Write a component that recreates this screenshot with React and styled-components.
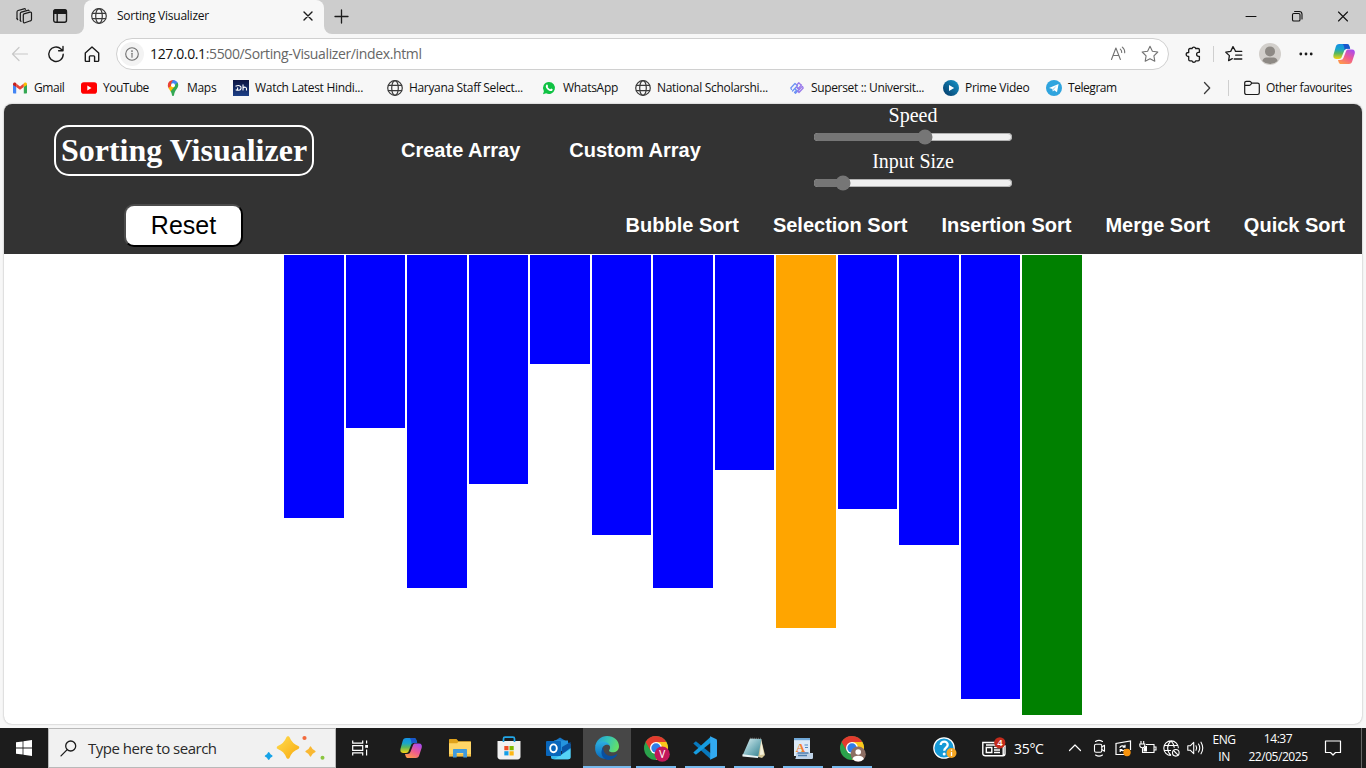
import React from 'react';
import styled, { createGlobalStyle, css } from 'styled-components';

const UI = '"Open Sans", "Noto Sans", "Liberation Sans", sans-serif';

const GlobalStyle = createGlobalStyle`
  *, *::before, *::after { box-sizing: border-box; }
  html, body { margin: 0; padding: 0; }
  body { background: #f7f7f7; overflow: hidden; font-family: ${UI}; }
  svg { display: block; flex: none; overflow: visible; }
`;

const Screen = styled.div`
  width: 1366px;
  height: 768px;
  display: flex;
  flex-direction: column;
  background: #f7f7f7;
`;

/* ---------- browser chrome ---------- */

const TabStrip = styled.div`
  height: 34px;
  display: flex;
  background: #cdcdcd;
`;

const StripLeft = styled.div`
  width: 84px;
  display: flex;
  align-items: center;
  gap: 19px;
  padding: 0 0 2px 16px;
  border-bottom-right-radius: 8px;
  background: #cdcdcd;
`;

const TabBack = styled.div`
  flex: ${p => (p.$fill ? 1 : 'none')};
  background: #f7f7f7;
  display: flex;
`;

const Tab = styled.div`
  width: 240px;
  height: 34px;
  display: flex;
  align-items: center;
  padding: 0 8px 2px 7px;
  background: #f7f7f7;
  border-radius: 8px 8px 0 0;
`;

const TabCorners = styled.div`
  background: linear-gradient(#cdcdcd 16px, #f7f7f7 16px);
`;

const TabTitle = styled.span`
  flex: 1;
  margin-left: 10px;
  font-size: 12px;
  line-height: 16px;
  padding-bottom: 1px;
  letter-spacing: -0.24px;
  color: #111;
  white-space: nowrap;
`;

const StripRight = styled.div`
  flex: 1;
  display: flex;
  align-items: center;
  padding: 0 17px 2px 10px;
  border-bottom-left-radius: 8px;
  background: #cdcdcd;
`;

const WindowButtons = styled.div`
  margin-left: auto;
  display: flex;
  gap: 34px;
`;

const Toolbar = styled.div`
  height: 40px;
  display: flex;
  align-items: center;
  padding: 0 0 0 11px;
`;

const NavButtons = styled.div`
  width: 105px;
  display: flex;
  gap: 18px;
`;

const AddressBar = styled.div`
  width: 1053px;
  height: 32px;
  display: flex;
  align-items: center;
  padding: 0 9px 0 3px;
  background: #fff;
  border: 1px solid #d0d0d0;
  border-radius: 16px;
`;

const SiteInfo = styled.div`
  width: 24px;
  height: 24px;
  display: grid;
  place-items: center;
  border-radius: 50%;
  background: #f3f3f3;
`;

const Url = styled.span`
  flex: 1;
  margin-left: 6px;
  padding-bottom: 1px;
  font-size: 14px;
  letter-spacing: -0.37px;
  color: #666;
  white-space: nowrap;
  b { font-weight: 400; color: #111; }
`;

const AddressActions = styled.div`
  display: flex;
  align-items: center;
  gap: 14px;
`;

const ToolbarActions = styled.div`
  display: grid;
  grid-template-columns: 18px 22px 20px 52px 20px 39px;
  place-items: center;
  padding-left: 15px;
  & > :last-child { justify-self: end; }
`;

const Divider = styled.span`
  width: 1px;
  height: 16px;
  background: #cfcfcf;
`;

const BookmarkBar = styled.div`
  height: 30px;
  display: flex;
  align-items: center;
  padding: 0 12px 2px;
`;

const BookmarkItem = styled.div`
  width: ${p => p.$width}px;
  display: flex;
  align-items: center;
  gap: 6px;
  font-size: 12px;
  line-height: 16px;
  letter-spacing: ${p => p.$spacing ?? -0.33}px;
  color: #111;
  white-space: nowrap;
`;

const BookmarkEnd = styled.div`
  margin-left: auto;
  display: flex;
  align-items: center;
  gap: 15px;
  & > :first-child { margin-right: 2px; }
`;

/* ---------- page ---------- */

const Page = styled.main`
  width: 1358px;
  height: 620px;
  margin: 0 4px 4px;
  overflow: hidden;
  background: #fff;
  border-radius: 8px;
  box-shadow: 0 0 2px rgba(0, 0, 0, 0.35);
`;

const Header = styled.header`
  height: 150px;
  background: #333;
  color: #fff;
`;

const HeaderTop = styled.div`
  height: 93px;
  display: flex;
  align-items: center;
  padding-left: 50px;
`;

const Logo = styled.h1`
  width: 260px;
  height: 51px;
  margin: 0;
  display: flex;
  align-items: center;
  justify-content: center;
  border: 2px solid #fff;
  border-radius: 15px;
  font: bold 32px/37px "Liberation Serif", serif;
  white-space: nowrap;
`;

const ArrayLinks = styled.nav`
  width: 300px;
  margin-left: 87px;
  display: flex;
  gap: 49px;
`;

const NavLink = styled.a`
  font: bold 20px/23px "Liberation Sans", sans-serif;
  color: #fff;
  white-space: nowrap;
`;

const Sliders = styled.div`
  width: 202px;
  margin-left: 111px;
`;

const SliderField = styled.label`
  height: 46px;
  display: flex;
  flex-direction: column;
  align-items: center;
  font: 20px/21px "Liberation Serif", serif;
`;

const Range = styled.input`
  width: 200px;
  height: 16px;
  margin: 3px 0 0;
  accent-color: #767676;
`;

const HeaderBottom = styled.div`
  height: 57px;
  display: flex;
  align-items: center;
  justify-content: space-between;
  padding: 0 17px 0 120px;
`;

const ResetButton = styled.button`
  width: 119px;
  height: 43px;
  padding: 0 0 1px;
  background: #fff;
  border: 2px solid;
  border-color: #4c4c4c #000 #000 #4c4c4c;
  border-radius: 10px;
  font: 25px/30px "Liberation Sans", sans-serif;
  color: #000;
`;

const SortLinks = styled.nav`
  display: flex;
  gap: 34px;
`;

const Bars = styled.section`
  display: flex;
  justify-content: center;
  align-items: flex-start;
  gap: 2px;
  padding-top: 1px;
`;

const Bar = styled.div`
  width: 59.5px;
  background: ${p => p.$color};
`;

/* ---------- taskbar ---------- */

const Taskbar = styled.footer`
  height: 40px;
  display: flex;
  background: #1c1c1c;
  color: #fff;
`;

const cell = css`
  width: 48px;
  height: 40px;
  flex: none;
  display: grid;
  place-items: center;
`;

const StartButton = styled.div`${cell}`;
const TaskViewButton = styled.div`${cell} margin-right: 3px;`;

const SearchBox = styled.div`
  width: 288px;
  flex: none;
  display: flex;
  align-items: center;
  padding: 0 9px 0 11px;
  border: 1px solid #b9b9b9;
  background: #f1f1f1;
`;

const SearchText = styled.span`
  flex: 1;
  margin-left: 11px;
  font-size: 15px;
  letter-spacing: -0.5px;
  color: #2a2a2a;
  white-space: nowrap;
`;

const Apps = styled.div`
  flex: none;
  display: flex;
  gap: 1px;
`;

const AppButton = styled.div`
  ${cell}
  background: ${p => (p.$active ? '#474747' : 'transparent')};
  ${p => p.$line && css`
    background-image: linear-gradient(#76b9ed, #76b9ed);
    background-size: ${p.$line}px 2px;
    background-repeat: no-repeat;
    background-position: center bottom;
  `}
`;

const Tray = styled.div`
  flex: 1;
  display: flex;
  align-items: center;
  padding: 0 4px 0 57px;
`;

const Weather = styled.div`
  width: 81px;
  margin-left: 25px;
  display: flex;
  align-items: center;
  gap: 7px;
  font-size: 14px;
  letter-spacing: -0.3px;
  white-space: nowrap;
`;

const TrayIcons = styled.div`
  display: grid;
  grid-template-columns: repeat(6, 24px);
  place-items: center;
  margin-right: 3px;
`;

const TrayText = styled.div`
  width: ${p => p.$width}px;
  flex: none;
  text-align: center;
  font-size: 12px;
  line-height: ${p => p.$line}px;
  padding-bottom: 1px;
  letter-spacing: ${p => p.$spacing}px;
  white-space: nowrap;
`;

const ActionCentre = styled.div`
  width: 30px;
  display: grid;
  place-items: center;
`;

const ShowDesktop = styled.span`
  margin-left: auto;
  width: 1px;
  height: 40px;
  background: #666;
`;

/* ---------- icons ---------- */

const Line = ({ w = 16, h = w, box, color = '#1b1b1b', sw = 1.2, children }) => (
  <svg width={w} height={h} viewBox={box || `0 0 ${w} ${h}`} fill="none" stroke={color}
    strokeWidth={sw} strokeLinecap="round" strokeLinejoin="round">{children}</svg>
);

const Workspaces = () => (
  <Line w={17} h={16} sw={1.2}>
    <path d="M8 5.8 14 4.2c.8-.2 1.5.2 1.5 1v6.2c0 .7-.3 1.2-1 1.4l-5.6 1.9c-.9.3-1.6-.1-1.6-1V7c0-.7.2-1 .7-1.2Z" />
    <path d="M4.3 12.5V5.6c0-.8.4-1.3 1.1-1.5l6.2-1.8c.6-.2 1.1 0 1.4.4M1 10.7V4.1c0-.8.4-1.4 1.1-1.6L8 .8c.7-.2 1.2 0 1.5.5" />
    <path d="m4.300 12.500.7.8M1 10.700l.7.8" />
  </Line>
);

const TabActions = () => (
  <Line w={16} sw={1.4}>
    <rect x="1.7" y="1.7" width="12.8" height="12.6" rx="2" />
    <path d="M2 3.5C2 2.3 2.6 2 3.6 2h9c1 0 1.7.4 1.7 1.4v1.8H2Z" fill="#1b1b1b" />
    <path d="M5.2 5v9" />
  </Line>
);

const Globe = ({ size = 16, color = '#3b3b3b', sw = 1.2 }) => (
  <Line w={size} box="0 0 16 16" color={color} sw={sw}>
    <circle cx="8" cy="8" r="7.3" />
    <ellipse cx="8" cy="8" rx="3.3" ry="7.3" />
    <path d="M1.4 5.3h13.2M1.4 10.7h13.2" />
  </Line>
);

const SmallClose = () => <Line w={16} sw={1.4}><path d="m4 4 8 8M12 4l-8 8" /></Line>;
const Plus = () => <Line w={15} sw={1.3}><path d="M7.5 1v13M1 7.5h13" /></Line>;
const Minimise = () => <Line w={12} color="#111" sw={1}><path d="M1 6.5h10" /></Line>;
const Restore = () => (
  <Line w={12} color="#111" sw={1.1}>
    <rect x="1.5" y="3.5" width="7.5" height="7.5" rx="1.3" />
    <path d="M3.6 1.5h4.6c1.8 0 2.8 1 2.8 2.8v4.6" />
  </Line>
);
const CloseWindow = () => <Line w={12} color="#111" sw={1.1}><path d="m1.5 2 9 9M10.5 2l-9 9" /></Line>;

const Back = () => <Line w={18} color="#c8c8c8" sw={1.2}><path d="M16.5 9H1.5M8 2.5 1.5 9 8 15.5" /></Line>;
const Reload = () => (
  <Line w={18} sw={1.4}><path d="M16.2 9.2A7.2 7.2 0 1 1 14 4.1l1.9 1.6M16 1.5v4.3h-4.4" /></Line>
);
const Home = () => (
  <Line w={18} sw={1.4}>
    <path d="M2.3 8.1 9 2l6.7 6.1v7.4c0 .6-.3.9-.9.9h-3.2v-4.6c0-.6-.3-.9-.9-.9H7.3c-.6 0-.9.3-.9.9v4.6H3.2c-.6 0-.9-.3-.9-.9Z" />
  </Line>
);
const Info = () => (
  <Line w={14} color="#6e6e6e" sw={1.1}>
    <circle cx="7" cy="7" r="6.3" /><path d="M7 6.3v4" /><circle cx="7" cy="4.1" r=".35" fill="#6e6e6e" />
  </Line>
);
const ReadAloud = () => (
  <Line w={18} color="#737373" sw={1.1}>
    <path d="M2.5 14.5 6.9 3l4.5 11.5M4 10.5h5.9M11.3 4.2c1 .9 1.5 2 1.4 3.3M13.3 2.2c1.7 1.4 2.6 3.3 2.4 5.6" />
  </Line>
);
const starPath = 'm9 1.3 2.4 4.9 5.4.8-3.9 3.8.9 5.4L9 13.7l-4.8 2.5.9-5.4L1.2 7l5.4-.8Z';
const Star = () => <Line w={18} color="#737373" sw={1.1}><path d={starPath} /></Line>;
const Puzzle = () => (
  <Line w={17} sw={1.3}>
    <path d="M5 2.500h2a1.900 1.900 0 0 1 3.700 0h2.400c.8 0 1.300.5 1.300 1.300v2.500h-.8a2 2 0 0 0 0 4h.8v3.200c0 .8-.5 1.300-1.300 1.300h-2.400a1.900 1.900 0 0 1-3.700 0H5c-.8 0-1.300-.5-1.300-1.300v-3h-.5a2 2 0 0 1 0-4h.5V3.800c0-.8.5-1.300 1.300-1.300Z" />
  </Line>
);
const Favourites = () => (
  <Line w={18} sw={1.3}>
    <path d="M10.3 5.7 8 1.6 5.7 6.4l-4.9.8 3.6 3.4-.8 5 3.7-2M10.3 6.3h6.5M10.6 10.1h6.2M9.2 14h7.6" />
  </Line>
);
const Avatar = () => (
  <svg width="22" height="22" viewBox="0 0 22 22">
    <circle cx="11" cy="11" r="11" fill="#d2cfcb" /><circle cx="11" cy="8.4" r="5" fill="#8d8984" />
    <path d="M3.4 18c.4-2.4 2-3.6 4-3.6h7.2c2 0 3.6 1.2 4 3.6A11 11 0 0 1 3.4 18Z" fill="#8d8984" />
  </svg>
);
const Dots = () => (
  <svg width="14" height="4" viewBox="0 0 14 4" fill="#1b1b1b">
    <circle cx="1.8" cy="2" r="1.4" /><circle cx="7" cy="2" r="1.4" /><circle cx="12.2" cy="2" r="1.4" />
  </svg>
);

const Copilot = ({ id }) => (
  <svg width="22" height="20" viewBox="0 0 22 20">
    <defs>
      <linearGradient id={`${id}a`} x1="0" y1="0" x2="0" y2="1">
        <stop offset="0" stopColor="#168fe4" /><stop offset=".35" stopColor="#18a5cb" /><stop offset=".62" stopColor="#58b75c" /><stop offset="1" stopColor="#f5d313" />
      </linearGradient>
      <linearGradient id={`${id}b`} x1=".8" y1="0" x2=".2" y2="1">
        <stop offset="0" stopColor="#a94bef" /><stop offset=".5" stopColor="#ef5a91" /><stop offset="1" stopColor="#ff9b48" />
      </linearGradient>
    </defs>
    <path d="M6.2 0h7.6c1.5 0 2.2.9 2.6 2.3l.8 2.5h-2.8c-1.9 0-2.9.9-3.5 2.6L8.7 13c-.5 1.4-1.3 1.9-2.6 1.9H3C.7 14.9 0 12.9.5 10.7L2.6 3.2C3.2 1.1 4.2 0 6.2 0Z" fill={`url(#${id}a)`} />
    <path d="M9.7 0h4.1c1.5 0 2.2.9 2.6 2.3l.8 2.5h-3c-1.3 0-2 .3-2.6 1.200C11.300 4 11.300 1.200 9.700 0Z" fill="#1956cc" />
    <path d="M15.8 20H8.2c-1.5 0-2.3-.8-2.7-2.3l-.5-1.7h2.2c1.8 0 2.8-.8 3.4-2.5l2.3-6c.5-1.3 1.3-1.9 2.6-1.9H19c2.4 0 3.3 2 2.7 4.2l-2.3 7c-.6 2.1-1.6 3.2-3.6 3.2Z" fill={`url(#${id}b)`} />
  </svg>
);

const Gmail = () => (
  <svg width="16" height="16" viewBox="0 0 16 16">
    <path d="M1 4v8.5c0 .6.4 1 1 1h2.2V6.6Z" fill="#4285f4" /><path d="M15 4v8.5c0 .6-.4 1-1 1h-2.2V6.6Z" fill="#34a853" />
    <path d="M4.2 6.9V3.5L8 6.4l3.8-2.9v3.4L8 9.8Z" fill="#ea4335" />
    <path d="M1 4.2c0-1.500 1.700-2.200 2.800-1.300l.4.400v3.600L1 4.900Z" fill="#c5221f" /><path d="M15 4.200c0-1.500-1.700-2.200-2.800-1.300l-.4.400v3.600L15 4.900Z" fill="#fbbc04" />
  </svg>
);
const YouTube = () => (
  <svg width="16" height="16" viewBox="0 0 16 16"><rect y="2.3" width="16" height="11.4" rx="2.8" fill="#f00" /><path d="m6.3 5.6 4.2 2.4-4.2 2.4Z" fill="#fff" /></svg>
);
const Maps = () => (
  <svg width="16" height="16" viewBox="0 0 16 16">
    <path d="M2.8 5.4A5.2 5.2 0 0 1 8 0v8.5L4.4 9C3.4 7.8 2.8 6.7 2.8 5.4Z" fill="#ea4335" />
    <path d="M8 0c3 0 5.2 2.3 5.2 5.2L9 5 6 3.5Z" fill="#4285f4" />
    <path d="M13.2 5.2c0 3.4-3.5 4.8-4.1 9.6-.2 1.6-2 1.6-2.2 0-.2-1.7-.9-3.1-1.7-4.3L12.3 2.5c.6.8.9 1.7.9 2.7Z" fill="#34a853" />
    <path d="M3.6 8 7 5l2.7 1.2-4.2 5.2C4.9 10.2 4.2 9.2 3.6 8Z" fill="#fbbc04" />
    <circle cx="8" cy="5.2" r="2" fill="#fff" />
  </svg>
);
const Hotstar = () => (
  <svg width="16" height="16" viewBox="0 0 16 16"><defs><linearGradient id="hs" x1="0" y1="0" x2="0" y2="1"><stop stopColor="#0b1340" /><stop offset="1" stopColor="#1d4087" /></linearGradient></defs>
    <rect width="16" height="16" fill="url(#hs)" /><path d="M2.5 6.2c4-1.6 6.1 0 5.5 2.3-.5 2-3.2 2.2-5.3 1.3M4.6 7.6v2.5M10 4.6v5.8M10 8c1.5-1.5 3.5-.8 3.5.7v1.7" fill="none" stroke="#fff" strokeWidth="1.1" /></svg>
);
const WhatsApp = () => (
  <svg width="16" height="16" viewBox="0 0 16 16"><path d="M8 2a6 6 0 1 1-2.900 11.300L2 14.200l.9-3A6 6 0 0 1 8 2Z" fill="#0fc243" />
    <path d="M5.300 4.900c.8-.8 1.300-.1 1.700 1 .2.500-.5.900-.4 1.200.6 1.100 1.400 1.800 2.400 2.200.5.100.8-1 1.200-.9l1.400.8c.3.900-.6 1.800-1.700 1.800-2.600-.1-5.300-2.900-5.100-5.100Z" fill="#fff" /></svg>
);
const Superset = () => (
  <svg width="16" height="16" viewBox="0 0 16 16" fill="none" strokeWidth="1.3" strokeLinecap="round" strokeLinejoin="round">
    <path d="M2.5 9.5 1.8 8 6 3.5l2.5 2.3M3.5 11l4-4.3 2.7 2.6-3.7 4M6 9l1.5 1.3-2 2.2" stroke="#6d93f4" />
    <path d="M13.5 6.5l.7 1.500L10 12.500 8.500 11M12.500 5 9 8.700 7.500 7M7.800 5l2-2.200L12 5M10 9.800l3-3.200" stroke="#9a7bea" />
  </svg>
);
const Prime = () => (
  <svg width="16" height="16" viewBox="0 0 16 16"><defs><linearGradient id="pv" x1="1" y1="0" x2="0" y2="1"><stop stopColor="#1798cc" /><stop offset="1" stopColor="#043765" /></linearGradient></defs><circle cx="8" cy="8" r="8" fill="url(#pv)" /><path d="m6 5 5.2 3L6 11Z" fill="#fff" /></svg>
);
const Telegram = () => (
  <svg width="16" height="16" viewBox="0 0 16 16"><circle cx="8" cy="8" r="8" fill="#2fa4de" /><path d="M3 7.9 12.6 4 11 12.2 8.2 10.2 6.8 11.6 6.4 9Z" fill="#fff" /><path d="m6.5 9.1 4.4-3.5-3.4 4.3Z" fill="#a9d6ef" /></svg>
);
const Folder = () => (
  <Line w={16} sw={1.2}><path d="M.7 12.8V3c0-1 .7-1.7 1.7-1.7h3.2c.5 0 .9.2 1.2.6l1 1.2h5.8c1 0 1.7.7 1.7 1.7v8c0 1-.7 1.7-1.7 1.7H2.4c-1 0-1.7-.7-1.7-1.7ZM.8 5.4h4.6c.9 0 1.1-.5 2.4-2.2" /></Line>
);
const Chevron = () => <Line w={8} h={14} color="#3c3c3c" sw={1.3}><path d="m1.5 1.5 5.2 5.5-5.2 5.5" /></Line>;

const Windows = () => (
  <svg width="16" height="16" viewBox="0 0 16 16" fill="#fff"><path d="m0 2.3 6.6-.9v6.2H0ZM7.4 1.3 16 0v7.600H7.400ZM0 8.400h6.600v6.200L0 13.700ZM7.400 8.400H16V16l-8.600-1.300Z" /></svg>
);
const Search = () => <Line w={17} color="#1b1b1b" sw={1.3}><circle cx="10.7" cy="6" r="5" /><path d="M7.2 9.6 1 15.9" /></Line>;
const sparkle = (x, y, r) => `M${x} ${y - r}Q${x + r * 0.28} ${y - r * 0.28} ${x + r} ${y}Q${x + r * 0.28} ${y + r * 0.28} ${x} ${y + r}Q${x - r * 0.28} ${y + r * 0.28} ${x - r} ${y}Q${x - r * 0.28} ${y - r * 0.28} ${x} ${y - r}Z`;
const Sparkles = () => (
  <svg width="62" height="26" viewBox="0 0 62 26" strokeLinejoin="round">
    <defs><linearGradient id="sp" x1="0" y1="0" x2="1" y2="1"><stop stopColor="#ffd94a" /><stop offset="1" stopColor="#f8ad13" /></linearGradient></defs>
    <path d={sparkle(24, 12.5, 9.6)} fill="url(#sp)" stroke="url(#sp)" strokeWidth="3.4" />
    <path d={sparkle(46.5, 16.5, 4.3)} fill="#f9b832" stroke="#f9b832" strokeWidth="1.6" />
    <path d={sparkle(4.7, 21, 3)} fill="#16a3e8" stroke="#16a3e8" strokeWidth="1.8" />
    <circle cx="40.5" cy="3" r="2.1" fill="#f26a3c" /><circle cx="58.5" cy="22.7" r="2" fill="#8ac540" />
  </svg>
);
const TaskView = () => (
  <svg width="17" height="16" viewBox="0 0 17 16" fill="none" stroke="#fff" strokeWidth="1.2"><path d="M.7.5v2.7h10V.5M.7 15.5v-2.7h10v2.7M.7 5.6h10v4.8H.7ZM14.6.5v3M14.6 9.5v6" /><path d="M13.2 5h2.8v2.8h-2.8Z" fill="#fff" stroke="none" /></svg>
);
const Explorer = () => (
  <svg width="22" height="19" viewBox="0 0 22 19"><path d="M0 1c0-.6.4-1 1-1h6.5l2 2.3H21c.6 0 1 .4 1 1V7H0Z" fill="#e0a21b" /><path d="M0 4.3h8l1.5-1.5H22V17H0Z" fill="#ffd667" /><path d="M0 15h22v2.6H0Z" fill="#f3bf45" /><path d="M4 18.6V11c0-.6.4-1 1-1h12c.6 0 1 .4 1 1v7.6h-3.7v-4.5H7.7v4.5Z" fill="#3e9add" /></svg>
);
const Store = () => (
  <svg width="24" height="24" viewBox="0 0 24 24"><path d="M6.5 7V2.8c0-1 .6-1.6 1.6-1.6h7.8c1 0 1.6.6 1.6 1.6V7" fill="none" stroke="#22a7e8" strokeWidth="1.7" /><path d="M.5 5h23v15.500c0 1.800-1 2.900-2.900 2.900H3.400c-1.900 0-2.900-1.100-2.900-2.900Z" fill="#f1f1f1" /><path d="M6.5 6V5M17.5 6V5" stroke="#22a7e8" strokeWidth="1.7" /><path d="M7.3 10h4.2v4.2H7.3Z" fill="#ee4e26" /><path d="M12.5 10h4.2v4.2h-4.2Z" fill="#7fb900" /><path d="M7.3 15.2h4.2v4.2H7.3Z" fill="#159fe8" /><path d="M12.5 15.2h4.2v4.2h-4.2Z" fill="#fdb714" /></svg>
);
const Outlook = () => (
  <svg width="25" height="23" viewBox="0 0 25 23"><path d="M4 7 14 .5 24.5 7v6H4Z" fill="#1678c9" /><path d="M8 3.5h14V14H8Z" fill="#2594df" /><path d="m16 10 8.5-5v7l-9 6Z" fill="#0954a5" /><path d="M5 13.5 15 18l9.5-7v9c0 1.3-.8 2.3-2.3 2.3H7.3C5.8 22.3 5 21.3 5 20Z" fill="#36b9ee" /><path d="m8 22.3 16.5-10V20c0 1.3-.8 2.3-2.3 2.3Z" fill="#55d2f5" /><rect y="4" width="15" height="15" rx="1" fill="#0966bb" /><ellipse cx="7.5" cy="11.3" rx="3.3" ry="3.9" fill="none" stroke="#fff" strokeWidth="1.9" /></svg>
);
const Edge = () => (
  <svg width="24" height="24" viewBox="0 0 24 24"><defs><linearGradient id="ea" x1="0" y1=".2" x2="1" y2=".5"><stop stopColor="#229bdc" /><stop offset=".5" stopColor="#35c5b7" /><stop offset="1" stopColor="#65df66" /></linearGradient><linearGradient id="eb" x1="0" y1="0" x2="0" y2="1"><stop stopColor="#2daee1" /><stop offset="1" stopColor="#0868bb" /></linearGradient></defs>
    <path d="M.3 10.5C1 4.3 5.9 0 12 0c7 0 12 4.6 12 10.2 0 3.9-2.9 6.1-6.3 6.1-2.9 0-4.3-1.3-3.3-2.6 1.8-2.4.1-6.7-4.9-6.7-4 0-7.5 1.2-9.2 3.5Z" fill="url(#ea)" />
    <path d="M.2 11C.8 7.6 4 5.6 7.8 5.6c4.1 0 6.6 2.2 7.1 4.5-1.2-1.3-3.1-1.6-4.6-1-3.5 1.5-4 5.4-2.2 8.6 1.7 3.1 4.6 4.8 7.7 4.5C8.300 25 -.8 20.500.2 11Z" fill="url(#eb)" />
    <path d="M8.6 10.6c-1.3 5.2 2.5 9.7 7.6 9.4 2.2-.1 3.800-.8 5.100-1.700.7-.4 1.300.1.900.8-2 3-5.300 4.900-8.800 4.900-6.300-.2-9.300-7.900-4.800-13.400Z" fill="#0a4f9e" />
  </svg>
);
const Chrome = ({ children }) => (
  <svg width="24" height="24" viewBox="0 0 24 24"><circle cx="12" cy="12" r="12" fill="#2ba24c" /><path d="M12 6h10.4A12 12 0 0 1 12 24l5.2-9Z" fill="#fcc61b" /><path d="M1.6 6 6.8 15 12 12V6l10.4.1A12 12 0 0 0 1.6 6Z" fill="#e33b2e" /><circle cx="12" cy="12" r="6" fill="#fff" /><circle cx="12" cy="12" r="4.7" fill="#2f7de9" />{children}</svg>
);
const ChromeV = () => <Chrome><circle cx="18.2" cy="18.2" r="7.6" fill="#c2185b" /><text x="18.2" y="21.7" textAnchor="middle" fontFamily="Roboto" fontSize="10" fill="#fff">V</text></Chrome>;
const ChromeUser = () => <Chrome><circle cx="18.2" cy="18.2" r="7.6" fill="#8d6e63" /><circle cx="18.2" cy="16" r="2.8" fill="#fff" /><path d="M12.5 23c.6-2.2 2.8-3.3 5.7-3.3s5.1 1.1 5.7 3.3a7.6 7.6 0 0 1-11.4 0Z" fill="#fff" /></Chrome>;
const VSCode = () => (
  <svg width="24" height="24" viewBox="0 0 24 24"><path d="m.3 7.6 1.9-1.8c.4-.3.9-.3 1.3 0L18 17.5v6Z" fill="#0879bd" /><path d="m.3 16.4 1.9 1.8c.4.3.9.3 1.3 0L18 6.5v-6Z" fill="#169cdf" /><path d="M17.2.3 23 3c.6.3 1 .8 1 1.5v15c0 .7-.4 1.2-1 1.5l-5.8 2.7Z" fill="#32a9f0" /></svg>
);
const Notepad = () => (
  <svg width="24" height="22" viewBox="0 0 24 22"><defs><linearGradient id="np" x1="0" y1="0" x2="1" y2="1"><stop stopColor="#e3f3f5" /><stop offset=".45" stopColor="#8bbec7" /><stop offset="1" stopColor="#2c7c8c" /></linearGradient></defs><path d="m19 2 4 16-3 3-7-2Z" fill="#d3c596" /><path d="m19 2 3 15.5-4 .5Z" fill="#f5f1dc" /><path d="M8 1.5 19.5 2 16 20.5.5 18.5Z" fill="url(#np)" /><path d="m.5 17.2 15.8 2-.3 1.8L.5 19.5Z" fill="#e9f3f4" /><path d="M8 1.3h11.5" stroke="#777" strokeDasharray="1 1" /></svg>
);
const WordPad = () => (
  <svg width="20" height="21" viewBox="0 0 20 21"><path d="M1 0h16v18H1Z" fill="#dceaf7" /><path d="M1 0h16v2.2H1Z" fill="#71a9d9" /><path d="M3 15h17v4.5c0 .8-.4 1.5-1.2 1.5H2c1.4-.6 1-4 1-6Z" fill="#bfd3e8" /><text x="2.7" y="13.5" fontFamily="Liberation Serif" fontWeight="bold" fontSize="13" fill="#f4802e">A</text><path d="M11.5 7H15M12 9.5h3" stroke="#5187be" /><path d="M4.5 15h11M5 17.5h9" stroke="#4d7dae" strokeWidth="1.3" /></svg>
);
const Help = () => (
  <svg width="24" height="22" viewBox="0 0 24 22"><circle cx="11" cy="11" r="10.2" fill="#1599d6" stroke="#fff" strokeWidth="1.2" /><path d="M7.7 8c0-4.6 7.2-4.4 7 0-.1 2.6-3.5 2.7-3.5 5.7" fill="none" stroke="#fff" strokeWidth="2.3" /><circle cx="11.2" cy="17" r="1.5" fill="#fff" /><circle cx="18.5" cy="16" r="5" fill="#f5a623" /><path d="M18.5 15v4M18.5 12.5v1.3" stroke="#fff" strokeWidth="1.3" /></svg>
);
const News = () => (
  <svg width="25" height="22" viewBox="0 0 25 22"><path d="M.8 5.5h20.4v13.2H3.3c-1.5 0-2.5-.8-2.5-2.3ZM21.2 9H23v7.5c0 1.5-.8 2.2-2 2.2" fill="none" stroke="#fff" strokeWidth="1.4" /><path d="M4.3 10.5h5.5v5H4.3ZM12 10.5h6M12 13h6M12 15.5h6M4 8h14" fill="none" stroke="#fff" strokeWidth="1.4" /><circle cx="17.8" cy="5.8" r="5.6" fill="#c42b1c" /><text x="17.8" y="9.3" textAnchor="middle" fontFamily="Open Sans" fontSize="9.5" fontWeight="600" fill="#fff">4</text></svg>
);
const Up = () => <Line w={14} color="#fff"><path d="m1.5 9.5 5.5-5.5 5.5 5.5" /></Line>;
const MeetNow = () => <Line w={14} h={18} color="#fff" sw={1.1}><rect x="2.5" y="5.2" width="7.3" height="8" rx="1.5" /><path d="m9.800 8 2.700-1.700v6L9.800 10.500M3.500 2.500q3.500-2.300 7 0M3.500 16q3.500 2.300 7 0" /></Line>;
const Sync = () => (
  <svg width="18" height="18" viewBox="0 0 18 18" fill="none" stroke="#fff" strokeWidth="1.2"><path d="M10 15.5H2V4.5L16.500 2v9M1.500 15.500h8M5.700 8.700c.8-2 3.500-2.600 5-.8M11 5.800v2.400H8.700M11 10.500c-1.200 1.500-3.300 1.600-4.500.3M6.200 12.900v-2.300h2.200" /><circle cx="13" cy="13.5" r="3.7" fill="#f7930d" stroke="none" /></svg>
);
const Battery = () => (
  <svg width="17" height="16" viewBox="0 0 17 16" fill="none" stroke="#fff" strokeWidth="1.1"><path d="M7 4.500h8v8H3.500V10M15.500 7H17v3h-1.500M2 1v3M4.700 1v3M.8 4h5v1.300C5.800 7 5 7.700 3.500 7.700S.8 7 .8 5.300ZM3.500 7.700V11" /><path d="M4.500 8.500 6.500 6H8v5.500H4.500Z" fill="#fff" stroke="none" /></svg>
);
const NoNetwork = () => (
  <svg width="17" height="17" viewBox="0 0 17 17" fill="none" stroke="#fff" strokeWidth="1.1"><path d="M8 15.500A7.300 7.300 0 1 1 15.400 8.300M8 15.500c-4.500-4.300-4.500-10.600 0-14.700 2 1.900 3.200 4.400 3.300 7M1.300 5.500h13.500M1.300 10.500H8" /><circle cx="12.8" cy="12.8" r="3.3" /><path d="m10.5 10.5 4.6 4.6" /></svg>
);
const Speaker = () => <Line w={17} h={16} color="#fff" sw={1.1}><path d="M.8 5.8h2.4l3.5-3.5v11.4l-3.5-3.5H.8ZM9 5.8q1.3 2.2 0 4.4M11.5 4q2.5 4 0 8M14 2.2q3.5 5.8 0 11.6" /></Line>;
const Message = () => <Line w={18} color="#fff" sw={1.2}><path d="M1.5 2h15v11.500h-5L9 16l-2.500-2.500h-5Z" /></Line>;

/* ---------- data ---------- */

const bookmarks = [
  ['Gmail', 69, Gmail, -0.45], ['YouTube', 84, YouTube, -0.5], ['Maps', 68, Maps, -0.3],
  ['Watch Latest Hindi...', 154, Hotstar, -0.3], ['Haryana Staff Select...', 154, Globe, -0.33],
  ['WhatsApp', 94, WhatsApp, -0.3], ['National Scholarshi...', 154, Globe, -0.3],
  ['Superset :: Universit...', 154, Superset, -0.35], ['Prime Video', 103, Prime, -0.3], ['Telegram', 80, Telegram, -0.45],
];

const sorts = ['Bubble Sort', 'Selection Sort', 'Insertion Sort', 'Merge Sort', 'Quick Sort'];

const bars = [
  [263], [173], [333], [229], [109], [280], [333], [215], [373, 'orange'], [254], [290], [444], [460, 'green'],
];

const apps = [
  { Icon: () => <Copilot id="task" /> }, { Icon: Explorer }, { Icon: Store }, { Icon: Outlook },
  { Icon: Edge, active: true, line: 48 }, { Icon: ChromeV, line: 40 }, { Icon: VSCode, line: 40 },
  { Icon: Notepad, line: 40 }, { Icon: WordPad, line: 40 }, { Icon: ChromeUser, line: 40 },
];

export default function App() {
  return (
    <Screen>
      <GlobalStyle />
      <TabStrip>
        <TabBack><StripLeft><Workspaces /><TabActions /></StripLeft></TabBack>
        <TabCorners>
          <Tab><Globe /><TabTitle>Sorting Visualizer</TabTitle><SmallClose /></Tab>
        </TabCorners>
        <TabBack $fill>
          <StripRight>
            <Plus />
            <WindowButtons><Minimise /><Restore /><CloseWindow /></WindowButtons>
          </StripRight>
        </TabBack>
      </TabStrip>
      <Toolbar>
        <NavButtons><Back /><Reload /><Home /></NavButtons>
        <AddressBar>
          <SiteInfo><Info /></SiteInfo>
          <Url><b>127.0.0.1</b>:5500/Sorting-Visualizer/index.html</Url>
          <AddressActions><ReadAloud /><Star /></AddressActions>
        </AddressBar>
        <ToolbarActions><Puzzle /><Divider /><Favourites /><Avatar /><Dots /><Copilot id="side" /></ToolbarActions>
      </Toolbar>
      <BookmarkBar>
        {bookmarks.map(([name, width, Icon, spacing]) => (
          <BookmarkItem key={name} $width={width} $spacing={spacing}><Icon />{name}</BookmarkItem>
        ))}
        <BookmarkEnd>
          <Chevron /><Divider />
          <BookmarkItem $width={110} $spacing={-0.37}><Folder />Other favourites</BookmarkItem>
        </BookmarkEnd>
      </BookmarkBar>
      <Page>
        <Header>
          <HeaderTop>
            <Logo>Sorting Visualizer</Logo>
            <ArrayLinks><NavLink>Create Array</NavLink><NavLink>Custom Array</NavLink></ArrayLinks>
            <Sliders>
              <SliderField>Speed<Range type="range" min="0" max="1000" defaultValue="565" /></SliderField>
              <SliderField>Input Size<Range type="range" min="0" max="1000" defaultValue="120" /></SliderField>
            </Sliders>
          </HeaderTop>
          <HeaderBottom>
            <ResetButton>Reset</ResetButton>
            <SortLinks>{sorts.map(name => <NavLink key={name}>{name}</NavLink>)}</SortLinks>
          </HeaderBottom>
        </Header>
        <Bars>
          {bars.map(([height, color = 'blue'], i) => <Bar key={i} $color={color} style={{ height }} />)}
        </Bars>
      </Page>
      <Taskbar>
        <StartButton><Windows /></StartButton>
        <SearchBox><Search /><SearchText>Type here to search</SearchText><Sparkles /></SearchBox>
        <TaskViewButton><TaskView /></TaskViewButton>
        <Apps>
          {apps.map(({ Icon, active, line }, i) => <AppButton key={i} $active={active} $line={line}><Icon /></AppButton>)}
        </Apps>
        <Tray>
          <Help />
          <Weather><News />35°C</Weather>
          <TrayIcons><Up /><MeetNow /><Sync /><Battery /><NoNetwork /><Speaker /></TrayIcons>
          <TrayText $width={28} $line={17} $spacing={-0.4}>ENG<br />IN</TrayText>
          <TrayText $width={80} $line={18} $spacing={-0.45}>14:37<br />22/05/2025</TrayText>
          <ActionCentre><Message /></ActionCentre>
          <ShowDesktop />
        </Tray>
      </Taskbar>
    </Screen>
  );
}
